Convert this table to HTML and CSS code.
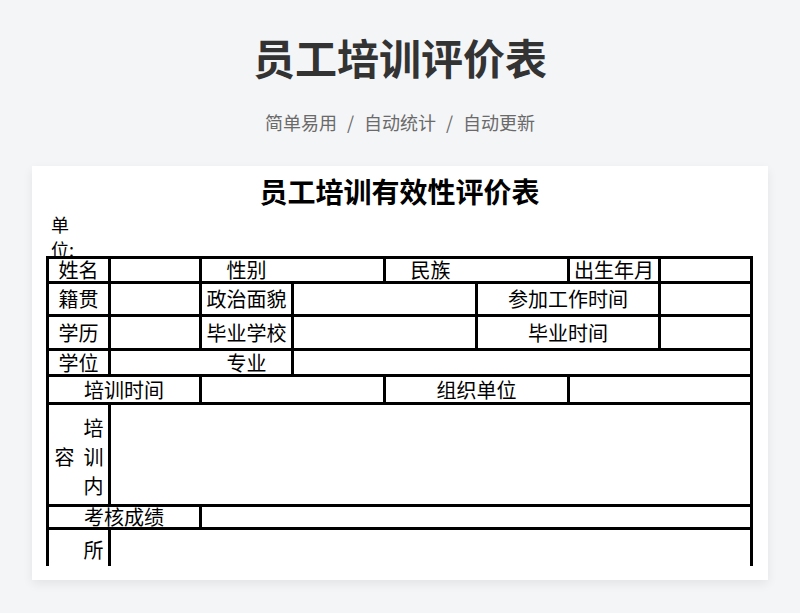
FILE: index.html
```html
<!DOCTYPE html>
<html lang="zh-CN">
<head>
<meta charset="utf-8">
<title>员工培训评价表</title>
<link rel="stylesheet" href="styles.css">
</head>
<body>
<header class="hero">
  <h1 class="hero-title">员工培训评价表</h1>
  <p class="hero-sub">简单易用<span class="sep">/</span>自动统计<span class="sep">/</span>自动更新</p>
</header>
<main class="card">
  <h2 class="sheet-title">员工培训有效性评价表</h2>
  <div class="unit">单位:</div>
  <div class="sheet">
    <div class="c">姓名</div>
    <div class="c"></div>
    <div class="c s2 first">性别</div>
    <div class="c s2 first">民族</div>
    <div class="c">出生年月</div>
    <div class="c"></div>

    <div class="c">籍贯</div>
    <div class="c"></div>
    <div class="c">政治面貌</div>
    <div class="c s2"></div>
    <div class="c s2">参加工作时间</div>
    <div class="c"></div>

    <div class="c">学历</div>
    <div class="c"></div>
    <div class="c">毕业学校</div>
    <div class="c s2"></div>
    <div class="c s2">毕业时间</div>
    <div class="c"></div>

    <div class="c">学位</div>
    <div class="c s2 second">专业</div>
    <div class="c s5"></div>

    <div class="c s2">培训时间</div>
    <div class="c s2"></div>
    <div class="c s2">组织单位</div>
    <div class="c s2"></div>

    <div class="v v-mid"><span class="vt">培训内容</span></div>
    <div class="c s7"></div>

    <div class="c s2">考核成绩</div>
    <div class="c s6"></div>

    <div class="v v-top"><span class="vt">所</span></div>
    <div class="c s7"></div>
  </div>
</main>
</body>
</html>
```

FILE: styles.css
```css
* { box-sizing: border-box; }

body {
  margin: 0;
  width: 800px;
  height: 613px;
  background: #f4f5f7;
  font-family: "Noto Sans CJK SC", "Noto Sans", sans-serif;
  overflow: hidden;
}

.hero {
  padding-top: 32px;
  text-align: center;
}

.hero-title {
  margin: 0;
  font-size: 42px;
  line-height: 50px;
  font-weight: 700;
  color: #333333;
}

.hero-sub {
  margin: 28px 0 0;
  font-size: 18px;
  line-height: 25px;
  color: #6a6a6a;
}

.sep {
  margin: 0 10px;
}

.card {
  margin: 31px 0 0 32px;
  width: 736px;
  height: 414px;
  background: #ffffff;
  padding: 6px 15px 14px 14px;
  box-shadow: 0 4px 10px rgba(0, 0, 0, 0.07);
  color: #000000;
}

.sheet-title {
  margin: 0;
  font-size: 28px;
  line-height: 38px;
  font-weight: 700;
  text-align: center;
}

.unit {
  margin: 2px 0 0 5px;
  width: 18px;
  height: 44px;
  font-size: 18px;
  line-height: 25px;
}

.sheet {
  position: relative;
  display: grid;
  grid-template-columns: 59px 88px 89px 89px 89px 89px 88px 89px;
  grid-template-rows: 22px 30px 31px 23px 25px 99px 20px 36px;
  gap: 3px;
  padding: 3px 3px 0 3px;
  width: 707px;
  background: #000000;
  font-size: 20px;
  line-height: 20px;
}

.c {
  background: #ffffff;
  display: flex;
  align-items: center;
  justify-content: center;
  white-space: nowrap;
}

.s2 { grid-column: span 2; }
.s5 { grid-column: span 5; }
.s6 { grid-column: span 6; }
.s7 { grid-column: span 7; }

.first { padding-right: 92px; }
.second { padding-left: 91px; }

.v {
  background: #ffffff;
  display: flex;
  justify-content: flex-end;
  align-items: flex-start;
}

.v-mid { padding-top: 13px; }
.v-top { padding-top: 10px; }

.vt {
  writing-mode: vertical-rl;
  height: 87px;
  width: 58px;
  line-height: 29px;
  letter-spacing: 9px;
  text-align: center;
}

.v-top .vt {
  width: 29px;
  text-align: start;
}
```
